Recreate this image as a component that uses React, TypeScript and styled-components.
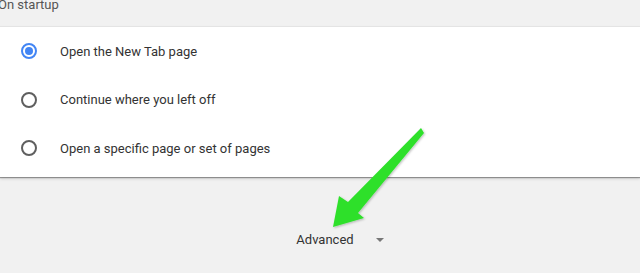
import React from 'react';
import styled, { createGlobalStyle } from 'styled-components';

const GlobalStyle = createGlobalStyle`
  html, body {
    margin: 0;
    padding: 0;
    background: #f1f1f1;
    font-family: Roboto, "Liberation Sans", Arial, sans-serif;
    overflow: hidden;
  }
`;

const Page = styled.div`
  position: relative;
  width: 640px;
  height: 273px;
  background: #f1f1f1;
  display: flex;
  flex-direction: column;
`;

const SectionHeader = styled.div`
  height: 26px;
  overflow: hidden;
  color: #555;
  font-size: 13px;
  line-height: 16px;
`;

const HeaderText = styled.div`
  margin-top: -3px;
  margin-left: -2px;
`;

const Card = styled.div`
  background: #fff;
  border-top: 1px solid #e4e4e4;
  padding: 0 0 4px;
  box-shadow: 0 1px 1px rgba(0, 0, 0, 0.35), 0 2px 3px rgba(0, 0, 0, 0.12);
`;

const Row = styled.label`
  display: flex;
  align-items: center;
  height: 48.5px;
  padding-left: 21px;
  color: #333;
  font-size: 13px;
  cursor: pointer;
`;

const Radio = styled.span<{ $checked?: boolean }>`
  box-sizing: border-box;
  width: 16px;
  height: 16px;
  border-radius: 50%;
  border: 2px solid ${({ $checked }) => ($checked ? '#4285f4' : '#5f5f5f')};
  display: flex;
  align-items: center;
  justify-content: center;
  margin-right: 23px;

  &::after {
    content: '';
    width: 8px;
    height: 8px;
    border-radius: 50%;
    background: ${({ $checked }) => ($checked ? '#4285f4' : 'transparent')};
  }
`;

const Footer = styled.div`
  flex: 1;
  display: flex;
  align-items: center;
  justify-content: center;
  padding-left: 40px;
  padding-top: 30px;
`;

const AdvancedButton = styled.button`
  display: flex;
  align-items: center;
  gap: 22px;
  background: none;
  border: none;
  padding: 0;
  color: #333;
  font-family: Roboto, "Liberation Sans", Arial, sans-serif;
  font-size: 13px;
  cursor: pointer;
`;

const Caret = styled.span`
  width: 0;
  height: 0;
  border-left: 4px solid transparent;
  border-right: 4px solid transparent;
  border-top: 4px solid #777;
  margin-top: 1px;
`;

const ArrowLayer = styled.svg`
  position: absolute;
  left: 0;
  top: 0;
  pointer-events: none;
`;

const options = [
  { label: 'Open the New Tab page', checked: true },
  { label: 'Continue where you left off', checked: false },
  { label: 'Open a specific page or set of pages', checked: false },
];

export default function App() {
  return (
    <Page>
      <GlobalStyle />
      <SectionHeader>
        <HeaderText>On startup</HeaderText>
      </SectionHeader>
      <Card>
        {options.map((opt) => (
          <Row key={opt.label}>
            <Radio $checked={opt.checked} />
            {opt.label}
          </Row>
        ))}
      </Card>
      <Footer>
        <AdvancedButton>
          Advanced
          <Caret />
        </AdvancedButton>
      </Footer>
      {/* annotation arrow drawn over the screenshot */}
      <ArrowLayer width="640" height="273" viewBox="0 0 640 273">
        <defs>
          <filter id="sh" x="-20%" y="-20%" width="140%" height="140%">
            <feDropShadow dx="1" dy="1" stdDeviation="1.2" floodColor="#000" floodOpacity="0.25" />
          </filter>
        </defs>
        <polygon
          points="333,227 339,196 348,202 421,128 424,133 358,213 364,218"
          fill="#2fe02c"
          filter="url(#sh)"
        />
      </ArrowLayer>
    </Page>
  );
}
